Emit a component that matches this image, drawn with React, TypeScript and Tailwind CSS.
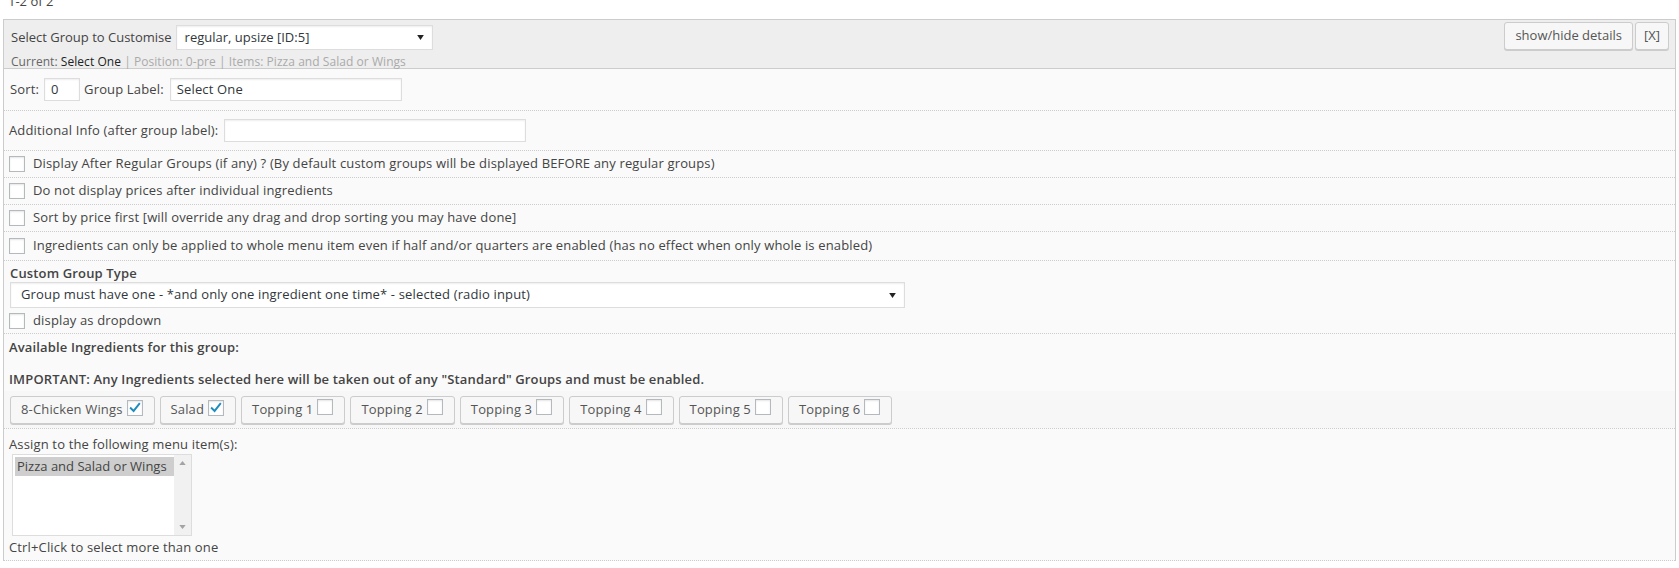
import React from 'react';

function Check({ on = false }: { on?: boolean }) {
  return (
    <span className="inline-flex h-4 w-4 shrink-0 items-center justify-center border border-[#b4b9be] bg-white shadow-[inset_0_1px_2px_rgba(0,0,0,0.1)]">
      {on && (
        <svg viewBox="0 0 16 16" className="h-[14px] w-[14px]">
          <path d="M3.2 8.2 L6.4 11.4 L12.8 3.4" fill="none" stroke="#1e8cbe" strokeWidth="2.2" strokeLinecap="square" />
        </svg>
      )}
    </span>
  );
}

function Arrow() {
  return (
    <svg viewBox="0 0 8 6" className="h-[5px] w-[7px]">
      <path d="M0 0 H8 L4 6 Z" fill="#222" />
    </svg>
  );
}

function SelectBox({ value, className }: { value: string; className: string }) {
  return (
    <div className={`flex items-center justify-between border border-[#ddd] bg-white pl-[8px] pr-[8px] text-[13px] text-[#32373c] shadow-[inset_0_1px_2px_rgba(0,0,0,0.07)] ${className}`}>
      <span>{value}</span>
      <Arrow />
    </div>
  );
}

function TextBox({ value, className }: { value?: string; className: string }) {
  return (
    <div className={`flex items-center border border-[#ddd] bg-white px-[6px] text-[13px] text-[#32373c] shadow-[inset_0_1px_2px_rgba(0,0,0,0.07)] ${className}`}>
      {value}
    </div>
  );
}

function WpButton({ children, className = '' }: { children: React.ReactNode; className?: string }) {
  return (
    <div className={`flex h-[28px] items-center rounded-[3px] border border-[#ccc] bg-[#f7f7f7] text-[13px] text-[#555] shadow-[0_1px_0_#ccc] ${className}`}>
      {children}
    </div>
  );
}

const options = [
  'Display After Regular Groups (if any) ? (By default custom groups will be displayed BEFORE any regular groups)',
  'Do not display prices after individual ingredients',
  'Sort by price first [will override any drag and drop sorting you may have done]',
];

const ingredients: { name: string; on: boolean }[] = [
  { name: '8-Chicken Wings', on: true },
  { name: 'Salad', on: true },
  { name: 'Topping 1', on: false },
  { name: 'Topping 2', on: false },
  { name: 'Topping 3', on: false },
  { name: 'Topping 4', on: false },
  { name: 'Topping 5', on: false },
  { name: 'Topping 6', on: false },
];

const row = 'flex items-center border-b border-dotted border-[#ccc]';

export default function App() {
  return (
    <div className="min-h-screen bg-white font-['Open_Sans',sans-serif] text-[13px] text-[#444]">
      <div className="h-[19px] overflow-hidden pl-[8px]">
        <div className="-mt-[8px] leading-[18px]">1-2 of 2</div>
      </div>

      <div className="mx-[3px] border-x border-t border-[#ccc] bg-[#fafafa]">
        {/* Header */}
        <div className="flex h-[49px] justify-between border-b border-[#ccc] bg-[#eee] pl-[7px] pr-[6px]">
          <div className="pt-[5px]">
            <div className="flex h-[25px] items-center">
              <span>Select Group to Customise</span>
              <SelectBox value="regular, upsize [ID:5]" className="ml-[4px] h-[25px] w-[257px]" />
            </div>
            <div className="mt-[5px] whitespace-nowrap text-[12px] leading-[14px] tracking-[0.05px] text-[#aaa]">
              <span className="text-[#666]">Current: </span>
              <span className="text-[#222]">Select One</span>
              <span> | Position: 0-pre | Items: Pizza and Salad or Wings</span>
            </div>
          </div>
          <div className="mt-[2px] flex gap-[2px]">
            <WpButton className="px-[10px]">show/hide details</WpButton>
            <WpButton className="px-[8px]">[X]</WpButton>
          </div>
        </div>

        <div className="tracking-[0.15px]">
          {/* Sort / label */}
          <div className={`${row} h-[42px] pl-[6px]`}>
            <span>Sort:</span>
            <TextBox value="0" className="ml-[5px] h-[23px] w-[36px]" />
            <span className="ml-[4px]">Group Label:</span>
            <TextBox value="Select One" className="ml-[6px] h-[23px] w-[232px]" />
          </div>

          <div className={`${row} h-[40px] pl-[5px]`}>
            <span>Additional Info (after group label):</span>
            <TextBox className="ml-[6px] h-[23px] w-[302px]" />
          </div>

          {options.map(o => (
            <div key={o} className={`${row} h-[27px] pl-[5px]`}>
              <Check />
              <span className="ml-[8px]">{o}</span>
            </div>
          ))}
          <div className={`${row} h-[29px] pl-[5px]`}>
            <Check />
            <span className="ml-[8px]">
              Ingredients can only be applied to whole menu item even if half and/or quarters are enabled (has no effect when only whole is enabled)
            </span>
          </div>

          {/* Custom group type */}
          <div className="border-b border-dotted border-[#ccc] pl-[6px] pt-[3px]">
            <div className="font-semibold leading-[18px]">Custom Group Type</div>
            <SelectBox value="Group must have one - *and only one ingredient one time* - selected (radio input)" className="h-[26px] w-[895px] pl-[10px]" />
            <div className="-ml-[1px] flex h-[25px] items-center">
              <Check />
              <span className="ml-[8px]">display as dropdown</span>
            </div>
          </div>

          {/* Ingredients */}
          <div className="border-b border-dotted border-[#ccc] pt-[4px]">
            <div className="pl-[5px] font-semibold leading-[18px]">Available Ingredients for this group:</div>
            <div className="mt-[14px] pl-[5px] font-semibold leading-[18px]">
              IMPORTANT: Any Ingredients selected here will be taken out of any "Standard" Groups and must be enabled.
            </div>
            <div className="mt-[3px] flex gap-[5px] bg-[#f7f7f7] pb-[4px] pl-[6px] pt-[5px]">
              {ingredients.map(i => (
                <WpButton key={i.name} className="pl-[10px] pr-[11px]">
                  <span>{i.name}</span>
                  <span className="ml-[4px]">
                    <Check on={i.on} />
                  </span>
                </WpButton>
              ))}
            </div>
          </div>

          {/* Assign */}
          <div className="border-b border-dotted border-[#ccc] pb-[4px] pl-[5px] pt-[6px]">
            <div className="leading-[18px]">Assign to the following menu item(s):</div>
            <div className="ml-[3px] mt-[1px] flex h-[82px] w-[180px] border border-[#ddd] bg-white tracking-normal">
              <div className="flex-1 pl-[2px] pt-[2px]">
                <div className="bg-[#cecece] pl-[2px] leading-[19px] text-[#444]">Pizza and Salad or Wings</div>
              </div>
              <div className="flex w-[17px] flex-col items-center justify-between bg-[#f1f1f1] py-[6px]">
                <svg viewBox="0 0 8 5" className="h-[4px] w-[7px]">
                  <path d="M0 5 H8 L4 0 Z" fill="#a3a3a3" />
                </svg>
                <svg viewBox="0 0 8 5" className="h-[4px] w-[7px]">
                  <path d="M0 0 H8 L4 5 Z" fill="#a3a3a3" />
                </svg>
              </div>
            </div>
            <div className="mt-[2px] leading-[18px]">Ctrl+Click to select more than one</div>
          </div>
        </div>
      </div>
    </div>
  );
}
